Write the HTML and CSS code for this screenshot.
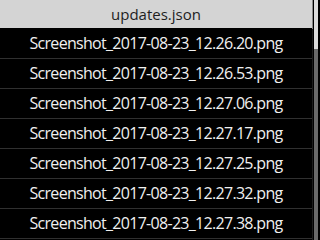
FILE: index.html
```html
<!DOCTYPE html>
<html>
<head>
	<meta charset="UTF-8">
	<title>updates.json</title>
	<link rel="stylesheet" href="styles.css">
</head>
<body>
	<div class="screen">
		<div class="list">
			<div class="title">updates.json</div>
			<div class="item">Screenshot_2017-08-23_12.26.20.png</div>
			<div class="item">Screenshot_2017-08-23_12.26.53.png</div>
			<div class="item">Screenshot_2017-08-23_12.27.06.png</div>
			<div class="item">Screenshot_2017-08-23_12.27.17.png</div>
			<div class="item">Screenshot_2017-08-23_12.27.25.png</div>
			<div class="item">Screenshot_2017-08-23_12.27.32.png</div>
			<div class="item">Screenshot_2017-08-23_12.27.38.png</div>
		</div>
		<div class="scrollbar">
			<div class="thumb"></div>
		</div>
	</div>
</body>
</html>
```

FILE: styles.css
```css
html,
body {
	margin: 0;
	background: #000;
}

.screen {
	display: flex;
	width: 320px;
	height: 240px;
	overflow: hidden;
	font-family: "Open Sans", "DejaVu Sans", sans-serif;
}

.list {
	width: 312px;
	border-right: 1px solid #1c1c1c;
}

.title {
	height: 28px;
	line-height: 28px;
	text-align: center;
	font-size: 15px;
	color: #1e1e1e;
	background: #d4d4d4;
	border-bottom: 1px solid #000;
	box-shadow: 1px 0 0 #8a8a8a;
}

.item {
	height: 29px;
	line-height: 29px;
	text-align: center;
	font-size: 16px;
	letter-spacing: -0.7px;
	color: #f0f0f0;
	border-bottom: 1px solid #303030;
}

.scrollbar {
	width: 4px;
	height: 240px;
	margin-left: 1px;
	background: #6a6a6a;
}

.thumb {
	height: 49px;
	background: #dcdcdc;
}
```
